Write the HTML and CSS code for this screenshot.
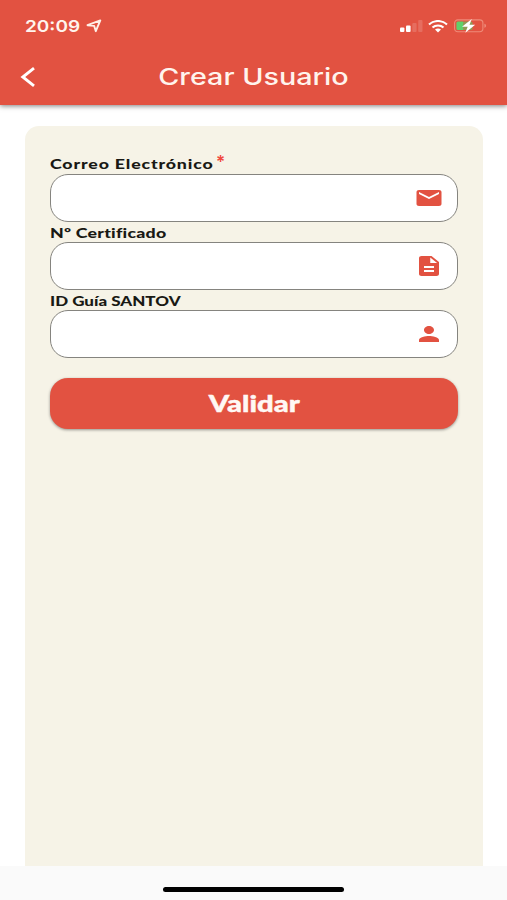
FILE: index.html
```html
<!DOCTYPE html>
<html lang="es">
<head>
    <meta charset="UTF-8">
    <meta name="viewport" content="width=device-width, initial-scale=1.0">
    <title>Crear Usuario</title>
    <link rel="stylesheet" href="styles.css">
</head>
<body>

<header class="header">
    <div class="status">
        <span class="time">20:09</span>
        <svg class="arrow" width="17" height="14" viewBox="0 0 17 14">
            <path d="M1.5 6.2L14.3 1.4L9.8 12.2L8.2 6.9Z" fill="none" stroke="#fff0e8" stroke-width="1.9" stroke-linejoin="round"/>
        </svg>
        <svg class="signal" width="24" height="13" viewBox="0 0 24 13">
            <rect x="0" y="7.5" width="4.4" height="4.5" rx="1" fill="#fff"/>
            <rect x="6" y="5.5" width="4.6" height="6.5" rx="1" fill="#fff"/>
            <rect x="12.3" y="3" width="4.3" height="9" rx="1" fill="#fff" opacity=".16"/>
            <rect x="18.2" y="0" width="4.3" height="12" rx="1" fill="#fff" opacity=".16"/>
        </svg>
        <svg class="wifi" width="20" height="13" viewBox="0 0 20 13">
            <g fill="none" stroke="#fff" stroke-width="2.1">
                <path d="M1 4.6C6 -.2 14 -.2 19 4.6"/>
                <path d="M4.5 7.6C7.5 4.7 12.5 4.7 15.5 7.6"/>
            </g>
            <path d="M7 9.6C8.6 8.2 11.4 8.2 13 9.6L10 12.4Z" fill="#fff"/>
        </svg>
        <svg class="battery" width="33" height="14" viewBox="0 0 33 14">
            <rect x=".6" y=".9" width="28.3" height="11.8" rx="3.2" fill="none" stroke="#ee8b79" stroke-width="1.1"/>
            <path d="M30.4 4.8C32.6 5.2 32.6 8.4 30.4 8.8Z" fill="#ee8b79"/>
            <rect x="2.4" y="2.6" width="8" height="8.4" rx="1.5" fill="#5fd06a"/>
            <rect x="9" y="2.6" width="9.5" height="8.4" rx="1.5" fill="#8f9a55"/>
            <path d="M17.8 0L8 7.7H13.7L11.3 13.8L21.2 5.7H15.5Z" fill="#fff"/>
        </svg>
    </div>
    <div class="navbar">
        <svg class="back" width="16" height="22" viewBox="0 0 16 22">
            <path d="M14 2.2L2.8 11L14 19.8" fill="none" stroke="#fff" stroke-width="2.9"/>
        </svg>
        <h1 class="title">Crear Usuario</h1>
    </div>
</header>

<main class="content">
    <form class="card">
        <div class="field">
            <label for="email"><span class="label-text label-email">Correo Electrónico</span><sup class="required">*</sup></label>
            <div class="input-box">
                <input type="text" id="email">
                <svg width="30" height="24" viewBox="0 0 24 24" preserveAspectRatio="none">
                    <path d="M20 4H4c-1.1 0-2 .9-2 2v12c0 1.1.9 2 2 2h16c1.1 0 2-.9 2-2V6c0-1.1-.9-2-2-2zm0 4l-8 5-8-5V6l8 5 8-5v2z"/>
                </svg>
            </div>
        </div>
        <div class="field">
            <label for="certificate"><span class="label-text label-cert">Nº Certificado</span></label>
            <div class="input-box">
                <input type="text" id="certificate">
                <svg width="30" height="24" viewBox="0 0 24 24" preserveAspectRatio="none">
                    <path d="M14 2H6c-1.1 0-2 .9-2 2v16c0 1.1.9 2 2 2h12c1.1 0 2-.9 2-2V8l-6-6zm2 16H8v-2h8v2zm0-4H8v-2h8v2zm-3-5V3.5L18.5 9H13z"/>
                </svg>
            </div>
        </div>
        <div class="field">
            <label for="guide"><span class="label-text label-guide">ID Guía SANTOV</span></label>
            <div class="input-box">
                <input type="text" id="guide">
                <svg width="30" height="24" viewBox="0 0 24 24" preserveAspectRatio="none">
                    <path d="M12 12c2.21 0 4-1.79 4-4s-1.79-4-4-4-4 1.79-4 4 1.79 4 4 4zm0 2c-2.67 0-8 1.34-8 4v2h16v-2c0-2.66-5.33-4-8-4z"/>
                </svg>
            </div>
        </div>
        <button type="button" class="submit"><span class="submit-text">Validar</span></button>
    </form>
</main>

<footer class="footer">
    <div class="home-bar"></div>
</footer>

</body>
</html>
```
FILE: styles.css
```css
* {
    box-sizing: border-box;
}
body {
    margin: 0;
    height: 900px;
    display: flex;
    flex-direction: column;
    overflow: hidden;
    background-color: #ffffff;
    font-family: Inter, sans-serif;
}
.header {
    height: 105px;
    flex: none;
    background-color: #e25241;
    box-shadow: 0 1px 5px rgba(0, 0, 0, 0.5);
    color: #fff4ed;
}
.status {
    height: 52px;
    padding: 0 21px 0 25px;
    display: flex;
    align-items: center;
}
.time {
    width: 61px;
    font-size: 16.5px;
    font-weight: 600;
    white-space: nowrap;
    transform: scaleX(1.15);
    transform-origin: left;
}
.signal {
    margin-left: auto;
}
.wifi {
    margin-left: 4px;
}
.battery {
    margin-left: 6px;
    margin-right: -1px;
}
.navbar {
    height: 50px;
    display: grid;
    grid-template-columns: 60px 1fr 60px;
    align-items: center;
}
.back {
    margin-left: 20px;
}
.title {
    margin: 0;
    text-align: center;
    font-size: 23px;
    font-weight: 500;
    white-space: nowrap;
    transform: scaleX(1.25);
}
.content {
    flex: 1;
    padding: 21px 24px 0 25px;
}
.card {
    height: 740px;
    padding: 27px 25px 0;
    border-radius: 14px 14px 0 0;
    background-color: #f6f3e7;
}
.field {
    height: 68px;
    display: flex;
    flex-direction: column;
}
label {
    height: 21px;
    flex: none;
    display: flex;
    align-items: center;
    color: #191914;
    line-height: 21px;
}
.label-text {
    font-family: Lato, sans-serif;
    font-size: 14px;
    font-weight: 900;
    white-space: nowrap;
    transform: scaleX(1.27);
    transform-origin: left;
}
.label-email {
    width: 166px;
    letter-spacing: 0.65px;
}
.label-cert {
    padding-top: 2px;
    letter-spacing: 0.17px;
}
.label-guide {
    padding-top: 2px;
    transform: scaleX(1.215);
}
.required {
    font-size: 17px;
    font-weight: 600;
    line-height: 13px;
    color: #f0483e;
    margin-top: -3px;
}
.input-box {
    height: 48px;
    flex: none;
    display: flex;
    align-items: center;
    padding-right: 13px;
    border: 1.4px solid #85847f;
    border-radius: 18px;
    background-color: #ffffff;
}
.input-box input {
    flex: 1;
    min-width: 0;
    padding: 0 16px;
    border: none;
    outline: none;
    background: none;
    font-size: 16px;
}
.input-box svg {
    fill: #e25241;
}
.submit {
    display: block;
    width: 100%;
    height: 51px;
    margin-top: 21px;
    padding: 0;
    border: none;
    border-radius: 18px;
    background-color: #e25241;
    box-shadow: 0 1px 3px rgba(0, 0, 0, 0.4);
    color: #fff8f4;
}
.submit-text {
    display: inline-block;
    font-family: Lato, sans-serif;
    font-size: 22px;
    font-weight: 900;
    -webkit-text-stroke: 0.4px #fff8f4;
    transform: scaleX(1.33);
}
.footer {
    height: 34px;
    flex: none;
    display: flex;
    justify-content: center;
    padding-top: 21px;
    background-color: #fafafa;
}
.home-bar {
    width: 181px;
    height: 5px;
    border-radius: 3px;
    background-color: #000000;
}
```
